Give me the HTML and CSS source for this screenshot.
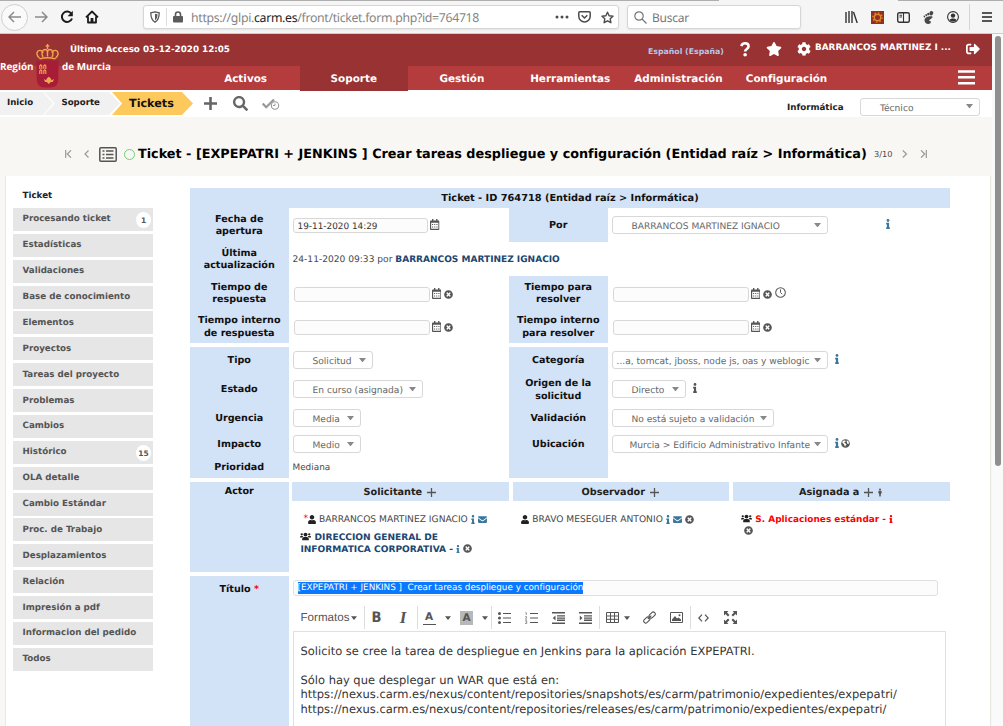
FILE: index.html
```html
<!DOCTYPE html>
<html lang="es">
<head>
<meta charset="utf-8">
<title>Ticket - ID 764718</title>
<link rel="stylesheet" href="styles.css">
</head>
<body>
<svg class="sprite" aria-hidden="true">
  <symbol id="info" viewBox="0 0 192 512"><path d="M20 424h20V280H20c-11 0-20-9-20-20v-48c0-11 9-20 20-20h112c11 0 20 9 20 20v212h20c11 0 20 9 20 20v48c0 11-9 20-20 20H20c-11 0-20-9-20-20v-48c0-11 9-20 20-20zM96 0C56 0 24 32 24 72s32 72 72 72 72-32 72-72S136 0 96 0z"/></symbol>
  <symbol id="star" viewBox="0 0 576 512"><path d="M259.3 17.8L194 150.2 47.9 171.5c-26.2 3.8-36.7 36.1-17.7 54.6l105.7 103-25 145.5c-4.5 26.3 23.2 46 46.4 33.7L288 439.6l130.7 68.7c23.2 12.2 50.9-7.4 46.4-33.7l-25-145.5 105.7-103c19-18.5 8.5-50.8-17.7-54.6L382 150.2 316.7 17.8c-11.7-23.6-45.6-23.9-57.4 0z"/></symbol>
  <symbol id="cog" viewBox="0 0 512 512"><path d="M487.4 315.7l-42.6-24.6c4.3-23.2 4.3-47 0-70.2l42.6-24.6c4.9-2.8 7.1-8.6 5.5-14-11.1-35.6-30-67.8-54.7-94.6-3.8-4.1-10-5.1-14.8-2.3L380.8 110c-17.9-15.4-38.5-27.3-60.8-35.1V25.8c0-5.6-3.9-10.5-9.4-11.7-36.7-8.2-74.3-7.8-109.2 0-5.5 1.2-9.4 6.1-9.4 11.7V75c-22.2 7.9-42.8 19.8-60.8 35.1L88.7 85.5c-4.9-2.8-11-1.9-14.8 2.3-24.7 26.7-43.6 58.9-54.7 94.6-1.7 5.4.6 11.2 5.5 14L67.3 221c-4.3 23.2-4.3 47 0 70.2l-42.6 24.6c-4.9 2.8-7.1 8.6-5.5 14 11.1 35.6 30 67.8 54.7 94.6 3.8 4.1 10 5.1 14.8 2.3l42.6-24.6c17.9 15.4 38.5 27.3 60.8 35.1v49.2c0 5.6 3.9 10.5 9.4 11.7 36.7 8.2 74.3 7.8 109.2 0 5.5-1.2 9.4-6.1 9.4-11.7v-49.2c22.2-7.9 42.8-19.8 60.8-35.1l42.6 24.6c4.9 2.8 11 1.9 14.8-2.3 24.7-26.7 43.6-58.9 54.7-94.6 1.5-5.5-.7-11.3-5.6-14.1zM256 336c-44.1 0-80-35.9-80-80s35.9-80 80-80 80 35.9 80 80-35.9 80-80 80z"/></symbol>
  <symbol id="signout" viewBox="0 0 512 512"><path d="M497 273L329 441c-15 15-41 4.5-41-17v-96H152c-13.3 0-24-10.7-24-24v-96c0-13.3 10.7-24 24-24h136V88c0-21.4 25.9-32 41-17l168 168c9.3 9.4 9.3 24.6 0 34zM192 436v-40c0-6.6-5.4-12-12-12H96c-17.7 0-32-14.3-32-32V160c0-17.7 14.3-32 32-32h84c6.6 0 12-5.4 12-12V76c0-6.6-5.4-12-12-12H96c-53 0-96 43-96 96v192c0 53 43 96 96 96h84c6.6 0 12-5.4 12-12z"/></symbol>
  <symbol id="search" viewBox="0 0 512 512"><path d="M505 442.7L405.3 343c-4.5-4.5-10.6-7-17-7H372c27.6-35.3 44-79.7 44-128C416 93.1 322.9 0 208 0S0 93.1 0 208s93.1 208 208 208c48.3 0 92.7-16.4 128-44v16.3c0 6.4 2.5 12.5 7 17l99.7 99.7c9.4 9.4 24.6 9.4 33.9 0l28.3-28.3c9.4-9.4 9.4-24.6.1-34zM208 336c-70.7 0-128-57.2-128-128 0-70.7 57.2-128 128-128 70.7 0 128 57.2 128 128 0 70.7-57.2 128-128 128z"/></symbol>
  <symbol id="remove" viewBox="0 0 512 512"><path d="M256 8C119 8 8 119 8 256s111 248 248 248 248-111 248-248S393 8 256 8zm121.600 313.100c4.700 4.700 4.700 12.300 0 17L338 377.600c-4.700 4.700-12.300 4.700-17 0L256 312l-65.100 65.600c-4.700 4.700-12.300 4.700-17 0L134.400 338c-4.700-4.700-4.700-12.300 0-17l65.600-65-65.600-65.100c-4.700-4.700-4.700-12.300 0-17l39.600-39.600c4.700-4.700 12.300-4.700 17 0l65 65.700 65.100-65.600c4.700-4.700 12.300-4.700 17 0l39.600 39.600c4.700 4.700 4.700 12.300 0 17L312 256l65.600 65.100z"/></symbol>
  <symbol id="user" viewBox="0 0 448 512"><path d="M224 256c70.700 0 128-57.300 128-128S294.700 0 224 0 96 57.300 96 128s57.300 128 128 128zm89.600 32h-16.700c-22.200 10.200-46.900 16-72.900 16s-50.600-5.800-72.900-16h-16.700C60.200 288 0 348.200 0 422.400V464c0 26.500 21.500 48 48 48h352c26.500 0 48-21.500 48-48v-41.600c0-74.200-60.200-134.400-134.400-134.400z"/></symbol>
  <symbol id="users" viewBox="0 0 20 16"><circle cx="3.200" cy="4" r="2.100"/><circle cx="16.800" cy="4" r="2.100"/><circle cx="10" cy="4.500" r="3.500"/><path d="M0 10V8.600C0 7.500.8 7 1.800 7h2.800c.6 0 1 .2 1.300.6C4.800 8.300 4.300 9.300 4.200 10zM20 10V8.600C20 7.500 19.200 7 18.200 7h-2.800c-.6 0-1 .2-1.300.6 1.100.7 1.600 1.700 1.700 2.400zM4 15v-2.500C4 10.500 5.500 9 7.500 9h5c2 0 3.500 1.500 3.500 3.500V15z"/></symbol>
  <symbol id="mail" viewBox="0 0 16 12"><path d="M1.500 0h13C15.300 0 16 .7 16 1.500v.4L8.600 7.300c-.4.300-.8.300-1.200 0L0 1.900v-.4C0 .7.700 0 1.500 0zM0 3.800l6.500 4.800c1 .7 2 .7 3 0L16 3.800v6.700c0 .8-.7 1.500-1.500 1.500h-13C.7 12 0 11.300 0 10.500z"/></symbol>
  <symbol id="cal" viewBox="0 0 14 16"><path fill-rule="evenodd" d="M3 0h2v2h4V0h2v2h1.500c.8 0 1.500.7 1.500 1.500v11c0 .8-.7 1.500-1.500 1.500h-11C.7 16 0 15.300 0 14.500v-11C0 2.700.7 2 1.500 2H3zM1.700 5.500v8.800h10.600V5.500zM3 7.200h1.600v1.600H3zm3.200 0h1.600v1.600H6.200zm3.200 0H11v1.600H9.400zM3 11h1.600v1.600H3zm3.200 0h1.600v1.600H6.200zm3.200 0H11v1.600H9.400z"/></symbol>
  <symbol id="clock" viewBox="0 0 16 16"><circle cx="8" cy="8" r="7" fill="none" stroke="currentColor" stroke-width="1.500"/><path d="M8 3.500V8l2.500 2.500" fill="none" stroke="currentColor" stroke-width="1.400"/></symbol>
  <symbol id="plus" viewBox="0 0 14 14"><path d="M5.600 0h2.800v5.600H14v2.800H8.400V14H5.600V8.400H0V5.600h5.600z"/></symbol>
  <symbol id="plusthin" viewBox="0 0 14 14"><path d="M6 0h2v6h6v2H8v6H6V8H0V6h6z"/></symbol>
  <symbol id="person" viewBox="0 0 6 12"><circle cx="3" cy="1.500" r="1.500"/><path d="M1 3.300h4l.8 4H4.500L4 12H2l-.5-4.700H.2z"/></symbol>
  <symbol id="globe" viewBox="0 0 16 16"><circle cx="8" cy="8" r="7.700"/><path fill="#fff" d="M2 5.200l2.500-2.700 3 .1.900 1.700-2 1.200-.5 1.700 2.600.7 1.200 1.800-1.500 1.700-.8 2.500-1.500-2.200-.4-2.200-2-1.500zM10.500 2.300l3 2.300.8 3.200-2 1-1.800-1.800.4-1.800-1.200-1z"/></symbol>
  <symbol id="caret" viewBox="0 0 8 5"><path d="M0 0h8L4 5z"/></symbol>
</svg>

<div class="browser">
  <div class="tabs-edge"><span class="edge-left"></span><span class="edge-right"></span></div>
  <div class="nav">
    <span class="back"><svg width="14" height="12" viewBox="0 0 14 12" class="ln grey"><path d="M13 6H1.500M6 1L1 6l5 5"/></svg></span>
    <svg width="14" height="12" viewBox="0 0 14 12" class="ln grey fwd"><path d="M1 6h11.500M8 1l5 5-5 5"/></svg>
    <svg width="14" height="14" viewBox="0 0 14 14" class="reload"><path d="M11.500 4A5.200 5.200 0 1 0 12 8.500" fill="none" stroke="#1b1b1b" stroke-width="2"/><path d="M12.800.8v5.400H7.600z" fill="#1b1b1b"/></svg>
    <svg width="14" height="14" viewBox="0 0 14 14" class="home"><path d="M1 7.300L7 1.500l6 5.800M3 6.500V12.500h8V6.500" fill="none" stroke="#1b1b1b" stroke-width="1.800" stroke-linejoin="round"/><path d="M5.600 8h2.800v4H5.600z" fill="#1b1b1b"/></svg>
    <div class="url">
      <svg width="10" height="12" viewBox="0 0 10 12" class="shield"><path d="M5 .8l4.200 1C9.200 6.500 8.300 9.500 5 11.200 1.700 9.500.8 6.500.8 1.800z" fill="none" stroke="#5b5b5b" stroke-width="1.300"/><path d="M5 2.700v6.500C7 8 7.500 5.500 7.500 3.200z" fill="#5b5b5b"/></svg>
      <span class="url-sep"></span>
      <svg width="10" height="12" viewBox="0 0 10 12" class="lock"><path d="M2.500 6V3.500a2.500 2.500 0 0 1 5 0V6" fill="none" stroke="#5b5b5b" stroke-width="1.600"/><rect y="5" width="10" height="6.500" rx="1" fill="#5b5b5b"/></svg>
      <span class="address">https://glpi.<b>carm.es</b>/front/ticket.form.php?id=764718</span>
      <svg width="14" height="4" viewBox="0 0 14 4" class="dots"><circle cx="2" cy="2" r="1.500"/><circle cx="7" cy="2" r="1.500"/><circle cx="12" cy="2" r="1.500"/></svg>
      <svg width="13" height="12" viewBox="0 0 13 12" class="pocket"><path d="M1.700.8h9.600c.5 0 .9.400.9.900v3.500a5.700 5.700 0 0 1-11.400 0V1.700c0-.5.400-.9.900-.9zM3.700 4.300l2.800 2.700 2.800-2.700" fill="none" stroke="#4b4b4b" stroke-width="1.500"/></svg>
      <svg width="13" height="13" viewBox="0 0 13 13"><path d="M6.500 1.200l1.600 3.500 3.900.5-2.800 2.600.7 3.900-3.400-1.900-3.400 1.900.7-3.900L1 5.200l3.900-.5z" fill="none" stroke="#4b4b4b" stroke-width="1.400" stroke-linejoin="round"/></svg>
    </div>
    <div class="find">
      <svg width="13" height="13" viewBox="0 0 13 13"><circle cx="5" cy="5" r="4.200" fill="none" stroke="#777" stroke-width="1.200"/><path d="M8 8l4.500 4.500" stroke="#777" stroke-width="1.300"/></svg>
      <span>Buscar</span>
    </div>
    <div class="tools">
      <svg width="13" height="12" viewBox="0 0 13 12"><path d="M1 1v11M4 0v12M7 0v12M8.500 1l3.700 11" fill="none" stroke="#333" stroke-width="1.400"/></svg>
      <svg width="13" height="13" viewBox="0 0 13 13"><rect width="13" height="13" fill="#982c20"/><circle cx="6.500" cy="6.500" r="3.200" fill="none" stroke="#d98a27" stroke-width="1.400"/><circle cx="6.500" cy="6.500" r="4.600" fill="none" stroke="#d98a27" stroke-width="1.400" stroke-dasharray="1.400 2.200"/></svg>
      <svg width="13" height="11" viewBox="0 0 13 11"><rect x=".7" y=".7" width="11.600" height="9.600" rx="1.500" fill="none" stroke="#333" stroke-width="1.400"/><path d="M6.500 1v9M2.500 3.200H5M2.500 5H5" stroke="#333" stroke-width="1.100"/></svg>
      <svg width="11" height="13" viewBox="0 0 11 13" fill="#222"><ellipse cx="8.300" cy="2.300" rx="1.900" ry="2.200" transform="rotate(25 8.300 2.300)"/><ellipse cx="5.200" cy="3.100" rx="1" ry="1.400"/><ellipse cx="3.200" cy="4.200" rx=".9" ry="1.200" transform="rotate(-15 3 4)"/><ellipse cx="1.400" cy="5.500" rx=".8" ry="1.100" transform="rotate(-25 1.400 5.500)"/><path d="M9.300 5.400C6 4.800 1.500 6.300 1.500 9.200c0 2.200 1.800 3.800 3.700 3.800s3.100-1.500 2.700-2.600c-.3-.7-2-.1-1.700-1C6.800 8 10.500 7 9.300 5.400z"/></svg>
      <svg width="12" height="12" viewBox="0 0 12 12"><circle cx="6" cy="6" r="5.400" fill="none" stroke="#333" stroke-width="1.100"/><circle cx="6" cy="4.600" r="2.200" fill="#333"/><path d="M2.500 9c1-2 6-2 7 0-1.500 2-5.500 2-7 0z" fill="#333"/></svg>
      <span class="tool-sep"></span>
      <svg width="10" height="10" viewBox="0 0 10 10"><path d="M0 1h10M0 5h10M0 9h10" stroke="#222" stroke-width="1.300"/></svg>
    </div>
  </div>
</div>

<div class="viewport">
  <div class="page">
    <header class="head">
      <div class="brand">
        <span>Región</span>
        <svg width="23" height="44" viewBox="0 0 23 44">
          <path d="M.5 16.500h22v7c0 0 0 12-.5 14-1 5-4 6-10.500 6S2 42.500 1 37.500c-.5-2-.5-21-.5-21z" fill="#a71d38"/>
          <g fill="none" stroke="#f0a650" stroke-width="1.400"><path d="M3.500 14c-2.500-2-3.500-5-1.500-7 2-1.500 4.500 0 5 2M19.500 14c2.500-2 3.500-5 1.500-7-2-1.500-4.500 0-5 2M7 13C5 9 6.500 5.500 9 5.500c1.500 0 2.500 1.500 2.500 3v4M16 13c2-4 .5-7.500-2-7.500-1.500 0-2.500 1.500-2.500 3M11.500 0v5M9.700 2h3.600M3.500 14.800c5-1.400 11-1.400 16 0"/></g>
          <g fill="none" stroke="#f0a650" stroke-width="1.100"><path d="M3.800 25v-3.200l1-1 1 1V25M7.800 25v-3.200l1-1 1 1V25M3.800 30v-3.200l1-1 1 1V30M7.800 30v-3.200l1-1 1 1V30"/></g>
          <path d="M8 35l2 1.200 1-2 1.800-1.500 1.800 1.500 1 2L18 35l-1.200 3h-2L12.800 40l-2-2H9z" fill="#f0a650"/>
        </svg>
        <span>de Murcia</span>
      </div>
      <div class="top">
        <span class="last">Último Acceso 03-12-2020 12:05</span>
        <a class="lang">Español (España)</a>
        <svg width="10" height="15" viewBox="0 0 10 15" class="help"><path d="M1.300 4.200C1.800 2.300 3 1.300 5 1.300c2.200 0 3.600 1.200 3.600 3 0 2.700-3.500 2.600-3.500 5.300" fill="none" stroke="#fff" stroke-width="2.600"/><circle cx="5.100" cy="12.800" r="1.800" fill="#fff"/></svg>
        <svg width="16" height="14" class="fav"><use href="#star"/></svg>
        <svg width="14" height="14" class="cog"><use href="#cog"/></svg>
        <span class="who">BARRANCOS MARTINEZ I ...</span>
        <svg width="14" height="14" class="exit"><use href="#signout"/></svg>
      </div>
      <nav class="menu">
        <a>Activos</a><a class="on">Soporte</a><a>Gestión</a><a>Herramientas</a><a>Administración</a><a>Configuración</a>
        <svg width="17" height="15" viewBox="0 0 17 15" class="burger"><path d="M0 1.500h17M0 7.300h17M0 13.200h17" stroke="#fff" stroke-width="2.500"/></svg>
      </nav>
    </header>

    <div class="crumbs">
      <a class="crumb c1">Inicio</a><a class="crumb c2">Soporte</a><a class="crumb c3">Tickets</a>
      <svg width="13" height="13" class="dim add"><use href="#plus"/></svg>
      <svg width="15" height="15" class="dim look"><use href="#search"/></svg>
      <svg width="18" height="12" viewBox="0 0 18 12" class="check"><path d="M.7 5.500l3.500 3.700L12 1.500" fill="none" stroke="#999" stroke-width="2.300"/><circle cx="13" cy="7.500" r="3.700" fill="#fff" stroke="#999" stroke-width="1.100"/><path d="M13 5.500v2h-2" fill="none" stroke="#999"/></svg>
      <span class="entity">Informática</span>
      <span class="select profile"><span>Técnico</span><svg width="6" height="4"><use href="#caret"/></svg></span>
    </div>

    <div class="title">
      <svg width="7" height="8" viewBox="0 0 7 8" class="ln pale first"><path d="M.7 0v8M6 .3L2.300 4 6 7.700"/></svg>
      <svg width="5" height="8" viewBox="0 0 5 8" class="ln pale prev"><path d="M4.500.5L1 4l3.500 3.500"/></svg>
      <svg width="18" height="15" viewBox="0 0 18 15" class="list"><rect x=".8" y=".8" width="16.400" height="13.400" rx="1" fill="none" stroke="#555" stroke-width="1.500"/><path d="M3.500 4h2M3.500 7.500h2M3.500 11h2M7 4h7.500M7 7.500h7.500M7 11h7.500" stroke="#555" stroke-width="1.300"/></svg>
      <span class="dot"></span>
      <h1>Ticket - [EXPEPATRI + JENKINS ] Crear tareas despliegue y configuración (Entidad raíz &gt; Informática)</h1>
      <span class="count">3/10</span>
      <svg width="6" height="8" viewBox="0 0 6 8" class="ln pale next"><path d="M.8.5L4.500 4 .8 7.500"/></svg>
      <svg width="7" height="8" viewBox="0 0 7 8" class="ln pale"><path d="M6.300 0v8M1 .3L4.700 4 1 7.700"/></svg>
    </div>

    <div class="card">
      <aside class="side">
        <a class="cur">Ticket</a>
        <a>Procesando ticket<b class="badge">1</b></a>
        <a>Estadísticas</a>
        <a>Validaciones</a>
        <a>Base de conocimiento</a>
        <a>Elementos</a>
        <a>Proyectos</a>
        <a>Tareas del proyecto</a>
        <a>Problemas</a>
        <a>Cambios</a>
        <a>Histórico<b class="badge">15</b></a>
        <a>OLA detalle</a>
        <a>Cambio Estándar</a>
        <a>Proc. de Trabajo</a>
        <a>Desplazamientos</a>
        <a>Relación</a>
        <a>Impresión a pdf</a>
        <a>Informacion del pedido</a>
        <a>Todos</a>
      </aside>

      <main class="form">
        <div class="caption">Ticket - ID 764718 (Entidad raíz &gt; Informática)</div>
        <div class="grid dates">
          <div class="lab">Fecha de<br>apertura</div>
          <div class="val"><span class="input">19-11-2020 14:29</span><svg width="9" height="10" class="cal"><use href="#cal"/></svg></div>
          <div class="lab">Por</div>
          <div class="val"><span class="select wide">BARRANCOS MARTINEZ IGNACIO<svg width="6" height="4"><use href="#caret"/></svg></span><svg width="4" height="10" class="info far"><use href="#info"/></svg></div>

          <div class="lab">Última<br>actualización</div>
          <div class="val span3"><span class="date">24-11-2020 09:33 por</span>&nbsp;<a class="person">BARRANCOS MARTINEZ IGNACIO</a></div>

          <div class="lab">Tiempo de<br>respuesta</div>
          <div class="val in"><span class="input"></span><svg width="9" height="10" class="cal"><use href="#cal"/></svg><svg width="9" height="9" class="rm"><use href="#remove"/></svg></div>
          <div class="lab">Tiempo para<br>resolver</div>
          <div class="val in r"><span class="input"></span><svg width="9" height="10" class="cal"><use href="#cal"/></svg><svg width="9" height="9" class="rm"><use href="#remove"/></svg><svg width="11" height="11" class="clock"><use href="#clock"/></svg></div>

          <div class="lab">Tiempo interno<br>de respuesta</div>
          <div class="val in"><span class="input"></span><svg width="9" height="10" class="cal"><use href="#cal"/></svg><svg width="9" height="9" class="rm"><use href="#remove"/></svg></div>
          <div class="lab">Tiempo interno<br>para resolver</div>
          <div class="val in r"><span class="input"></span><svg width="9" height="10" class="cal"><use href="#cal"/></svg><svg width="9" height="9" class="rm"><use href="#remove"/></svg></div>
        </div>

        <div class="grid props">
          <div class="lab">Tipo</div>
          <div class="val"><span class="select w80">Solicitud<svg width="6" height="4"><use href="#caret"/></svg></span></div>
          <div class="lab">Categoría</div>
          <div class="val"><span class="select wide cat">...a, tomcat, jboss, node js, oas y weblogic<svg width="6" height="4"><use href="#caret"/></svg></span><svg width="4" height="10" class="info"><use href="#info"/></svg></div>

          <div class="lab">Estado</div>
          <div class="val"><span class="select w130">En curso (asignada)<svg width="6" height="4"><use href="#caret"/></svg></span></div>
          <div class="lab">Origen de la<br>solicitud</div>
          <div class="val"><span class="select w74">Directo<svg width="6" height="4"><use href="#caret"/></svg></span><svg width="4" height="10" class="info dark"><use href="#info"/></svg></div>

          <div class="lab">Urgencia</div>
          <div class="val"><span class="select w68">Media<svg width="6" height="4"><use href="#caret"/></svg></span></div>
          <div class="lab">Validación</div>
          <div class="val"><span class="select w162">No está sujeto a validación<svg width="6" height="4"><use href="#caret"/></svg></span></div>

          <div class="lab">Impacto</div>
          <div class="val"><span class="select w68">Medio<svg width="6" height="4"><use href="#caret"/></svg></span></div>
          <div class="lab">Ubicación</div>
          <div class="val"><span class="select wide loc">Murcia &gt; Edificio Administrativo Infante<svg width="6" height="4"><use href="#caret"/></svg></span><svg width="4" height="10" class="info"><use href="#info"/></svg><svg width="9" height="9" class="globe"><use href="#globe"/></svg></div>

          <div class="lab">Prioridad</div>
          <div class="val plain">Mediana</div>
          <div class="lab"></div>
          <div class="val"></div>
        </div>

        <div class="actors">
          <div class="lab top-lab">Actor</div>
          <section class="actor">
            <h2>Solicitante <svg width="9" height="9"><use href="#plusthin"/></svg></h2>
            <p class="p1"><i class="req">*</i><svg width="8" height="9" class="blk"><use href="#user"/></svg><span>BARRANCOS MARTINEZ IGNACIO</span><svg width="4" height="9" class="info"><use href="#info"/></svg><svg width="9" height="7" class="mail"><use href="#mail"/></svg></p>
            <div class="group"><svg width="11" height="9" class="blk"><use href="#users"/></svg> DIRECCION GENERAL DE<br>INFORMATICA CORPORATIVA - <svg width="4" height="8" class="info"><use href="#info"/></svg><svg width="9" height="9" class="rm"><use href="#remove"/></svg></div>
          </section>
          <section class="actor">
            <h2>Observador <svg width="9" height="9"><use href="#plusthin"/></svg></h2>
            <p class="p2"><svg width="8" height="9" class="blk"><use href="#user"/></svg><span>BRAVO MESEGUER ANTONIO</span><svg width="4" height="9" class="info"><use href="#info"/></svg><svg width="9" height="7" class="mail"><use href="#mail"/></svg><svg width="9" height="9" class="rm"><use href="#remove"/></svg></p>
          </section>
          <section class="actor">
            <h2>Asignada a <svg width="9" height="9"><use href="#plusthin"/></svg><svg width="4" height="9" class="man"><use href="#person"/></svg></h2>
            <div class="group red"><svg width="11" height="9" class="blk"><use href="#users"/></svg> S. Aplicaciones estándar - <svg width="4" height="8" class="info"><use href="#info"/></svg><br><svg width="9" height="9" class="rm"><use href="#remove"/></svg></div>
          </section>
        </div>

        <div class="body">
          <div class="lab top-lab"><span>Título <i>*</i></span></div>
          <div class="edit">
            <div class="subject"><span>[EXPEPATRI + JENKINS ]&nbsp; Crear tareas despliegue y configuración</span></div>
            <div class="toolbar">
              <div class="tg fmt"><span>Formatos</span><svg width="6" height="4"><use href="#caret"/></svg></div>
              <div class="tg"><span class="t bold">B</span><span class="t ital">I</span></div>
              <div class="tg"><span class="t fc"><u>A</u></span><span class="t cr"><svg width="6" height="4"><use href="#caret"/></svg></span><span class="t bc"><em>A</em></span><span class="t cr2"><svg width="6" height="4"><use href="#caret"/></svg></span></div>
              <div class="tg">
                <span class="t"><svg width="13" height="12" viewBox="0 0 13 12"><circle cx="1.500" cy="1.500" r="1.500"/><circle cx="1.500" cy="6" r="1.500"/><circle cx="1.500" cy="10.500" r="1.500"/><path d="M5 1h8v1H5zM5 5.500h8v1H5zM5 10h8v1H5z"/></svg></span>
                <span class="t"><svg width="13" height="12" viewBox="0 0 13 12"><path d="M5 1h8v1H5zM5 5.500h8v1H5zM5 10h8v1H5z"/><path d="M.3.700h1V3M0 4.700h1.500v1.200L.3 7.200h1.500M0 8.700h1.700v2.800H0M.6 10h1" fill="none" stroke="currentColor" stroke-width=".6"/></svg></span>
                <span class="t"><svg width="13" height="12" viewBox="0 0 13 12"><path d="M0 0h13v1.400H0zM5 3.200h8v1.300H5zM5 5.400h8v1.300H5zM5 7.600h8v1.300H5zM0 10.500h13v1.400H0zM3.500 3.500v5L.8 6z"/></svg></span>
                <span class="t"><svg width="13" height="12" viewBox="0 0 13 12"><path d="M0 0h13v1.400H0zM5 3.200h8v1.300H5zM5 5.400h8v1.300H5zM5 7.600h8v1.300H5zM0 10.500h13v1.400H0zM.8 3.500v5L3.500 6z"/></svg></span>
              </div>
              <div class="tg">
                <span class="t"><svg width="13" height="11" viewBox="0 0 13 11"><path d="M.5.500h12v10H.5zM.5 4h12M.5 7.300h12M4.500.500v10M8.500.500v10" fill="none" stroke="currentColor"/></svg></span>
                <span class="t tc"><svg width="6" height="4"><use href="#caret"/></svg></span>
                <span class="t"><svg width="13" height="13" viewBox="0 0 13 13"><g fill="none" stroke="currentColor" stroke-width="1.100"><rect x="5.700" y="2" width="7" height="4" rx="2" transform="rotate(-45 9.200 4)"/><rect x=".3" y="7" width="7" height="4" rx="2" transform="rotate(-45 3.800 9)"/><path d="M4.800 8.200l3.500-3.500"/></g></svg></span>
                <span class="t"><svg width="13" height="11" viewBox="0 0 13 11"><path d="M.5.500h12v10H.5z" fill="none" stroke="currentColor"/><path d="M2 9V7.500L5 4l2 2.500 1.500-1L11 7.500V9z"/><circle cx="9.500" cy="3.200" r="1"/></svg></span>
              </div>
              <div class="tg">
                <span class="t"><svg width="11" height="8" viewBox="0 0 11 8"><path d="M4 .7L.8 4 4 7.300M7 .7L10.200 4 7 7.300" fill="none" stroke="currentColor" stroke-width="1.200"/></svg></span>
                <span class="t"><svg width="13" height="13" viewBox="0 0 13 13"><path d="M0 0h4.500L3 1.500l2.500 2.500L4 5.500 1.500 3 0 4.500zM13 0v4.500L11.500 3 9 5.500 7.500 4 10 1.500 8.500 0zM0 13V8.500L1.500 10 4 7.500 5.500 9 3 11.500 4.500 13zM13 13H8.500l1.500-1.500L7.500 9 9 7.500l2.500 2.500L13 8.500z"/></svg></span>
              </div>
            </div>
            <div class="text">
              <p>Solicito se cree la tarea de despliegue en Jenkins para la aplicación EXPEPATRI.</p>
              <p>&nbsp;</p>
              <p>Sólo hay que desplegar un WAR que está en:</p>
              <p>https://nexus.carm.es/nexus/content/repositories/snapshots/es/carm/patrimonio/expedientes/expepatri/</p>
              <p>https://nexus.carm.es/nexus/content/repositories/releases/es/carm/patrimonio/expedientes/expepatri/</p>
            </div>
          </div>
        </div>
      </main>
    </div>
  </div>
  <div class="scroll"><span></span></div>
</div>
</body>
</html>
```
FILE: styles.css
```css
* { box-sizing: border-box; margin: 0; padding: 0; }
html, body { height: 726px; overflow: hidden; }
body {
  width: 1003px;
  display: flex;
  flex-direction: column;
  background: #fff;
  font-family: "DejaVu Sans", Verdana, sans-serif;
  font-size: 9.1px;
  color: #484848;
  text-rendering: geometricPrecision;
}
svg { flex: none; fill: currentColor; }
.sprite { position: absolute; width: 0; height: 0; }
.ln { fill: none; stroke-width: 1.2; }
.grey { stroke: #8b8b8b; stroke-width: 1.5; }
.pale { stroke: #999; }

/* Browser chrome */
.browser { height: 34px; flex: none; background: #f5f5f5; border-bottom: 1px solid #ccc; }
.tabs-edge { height: 1px; display: flex; justify-content: space-between; }
.tabs-edge span { background: #aeaeae; }
.edge-left { width: 719px; }
.edge-right { width: 105px; }
.nav { height: 32px; display: flex; align-items: center; }
.back { width: 27px; height: 27px; margin-left: 1px; border: 1px solid #cfcfcf; border-radius: 50%; display: flex; align-items: center; justify-content: center; background: #fafafa; }
.fwd { margin-left: 6px; }
.reload { margin-left: 12px; }
.home { margin-left: 11px; }
.url { width: 476px; height: 24px; margin-left: 44px; padding-left: 6px; display: flex; align-items: center; background: #fff; border: 1px solid #d6d6d6; border-radius: 3px; box-shadow: 0 1px 2px rgba(0,0,0,.08); }
.url-sep { width: 1px; height: 18px; background: #ddd; margin: 0 6px; }
.address { width: 364px; margin-left: 8px; font: 12.3px "Noto Sans", sans-serif; letter-spacing: -.32px; color: #858585; white-space: nowrap; }
.address b { font-weight: 400; color: #222; }
.dots { fill: #4b4b4b; }
.pocket { margin: 0 10px 0 9px; }
.find { width: 174px; height: 24px; margin-left: 8px; padding-left: 6px; display: flex; align-items: center; gap: 5px; background: #fff; border: 1px solid #d6d6d6; border-radius: 3px; box-shadow: 0 1px 2px rgba(0,0,0,.08); font: 12px "Noto Sans", sans-serif; letter-spacing: -.25px; color: #777; }
.tools { margin-left: 44px; display: flex; align-items: center; gap: 13px; }
.tool-sep { width: 1px; height: 26px; background: #d5d5d5; margin: 0 -1px 0 -3px; }

/* Page area and scrollbar */
.viewport { flex: 1; display: flex; min-height: 0; }
.page { width: 992px; display: flex; flex-direction: column; background: #f8f7f3; overflow: hidden; }
.scroll { width: 11px; padding: 2px 0 0 3px; background: #fafafa; }
.scroll span { display: block; width: 6px; height: 430px; border-radius: 3px; background: #8f8f8f; }

/* Header */
.head { position: relative; height: 56px; flex: none; background: #b53c3d; color: #fff; font-weight: 700; }
.top { height: 32px; display: flex; align-items: center; background: #983233; white-space: nowrap; }
.top svg { margin-top: -2px; }
.brand { position: absolute; left: 0; top: 10px; display: flex; align-items: center; font: 700 9.9px "Open Sans", sans-serif; white-space: nowrap; }
.brand svg { margin: 0 3px 0 3px; }
.brand span { width: 33px; }
.last { width: 578px; margin-left: 70px; font-size: 8.77px; padding-bottom: 0; }
.lang { width: 92px; font-size: 7.8px; color: #b6c7e8; padding-top: 2px; }
.top .fav { margin-left: 16px; }
.top .cog { margin-left: 15px; }
.who { width: 151px; margin-left: 4px; font-size: 8.87px; padding-bottom: 5px; }
.menu { height: 24px; display: flex; align-items: flex-start; padding-left: 191.500px; font-size: 10.4px; }
.menu a { width: 108.2px; height: 24px; line-height: 26px; text-align: center; }
.menu .on { height: 25px; background: #983233; position: relative; }
.burger { margin: 4px 0 0 117px; }

/* Breadcrumb */
.crumbs { height: 27px; flex: none; display: flex; align-items: center; background: #fff; color: #222; font-weight: 700; }
.crumb { height: 23px; line-height: 23px; background: #f1f1f1; font-size: 8.6px; }
.c1 { width: 53px; padding-left: 7px; clip-path: polygon(0 0, 43px 0, 100% 50%, 43px 100%, 0 100%); }
.c2 { width: 76px; margin-left: -9px; padding-left: 17.500px; clip-path: polygon(0 0, 65px 0, 100% 50%, 65px 100%, 0 100%, 11px 50%); }
.c3 { width: 81px; margin-left: -8px; padding-left: 17px; background: #fec95c; color: #111; font-size: 11.2px; clip-path: polygon(0 0, 70px 0, 100% 50%, 70px 100%, 0 100%, 10px 50%); }
.dim { color: #666; }
.add { margin-left: 11px; }
.look { margin-left: 16px; }
.check { margin-left: 14px; }
.entity { width: 73px; margin-left: 507px; font-size: 8.7px; padding-top: 8px; }
.profile.select { width: 120px; margin-top: 6px; padding-left: 19px; }

.select { height: 18px; display: flex; align-items: center; justify-content: space-between; padding: 4px 6px 0 19px; background: #fff; border: 1px solid #d8d8d8; border-radius: 3px; font-weight: 400; color: #666; white-space: nowrap; font-size: 9.1px; }
.select svg { width: 7px; height: 4.500px; margin-top: -4px; color: #888; }

/* Title strip */
.title { height: 59px; flex: none; padding: 15px 0 0 65px; display: flex; align-items: center; white-space: nowrap; }
.prev { margin-left: 12px; }
.list { margin-left: 10px; }
.dot { width: 11px; height: 11px; margin-left: 7px; border: 1.5px solid #73cf78; border-radius: 50%; }
h1 { width: 736px; margin-left: 3px; padding-top: 1px; font-size: 12.81px; color: #000; }
.count { width: 28px; font-size: 8.2px; }
.next { margin-right: 12px; }

/* Card: side tabs and form */
.card { flex: 1; display: flex; margin: 0 1px 0 5px; border: 1px solid #e9e8e2; border-width: 0 1px; background: #fff; }
.side { width: 140px; margin-left: 7px; padding-top: 6px; display: flex; flex-direction: column; gap: 2.88px; font-weight: 700; font-size: 8.72px; }
.side a { height: 23px; flex: none; padding: 0 2px 0 9.500px; display: flex; align-items: center; justify-content: space-between; background: #e6e6e6; color: #555; white-space: nowrap; }
.side .cur { background: none; color: #222; padding-top: 4px; }
.badge { width: 15px; height: 16px; margin-top: 2px; border-radius: 50%; background: #fff; display: flex; align-items: center; justify-content: center; font-size: 7.500px; }
.form { width: 760px; margin: 12px 0 0 37px; }
.caption { height: 20px; line-height: 22px; text-align: center; font-weight: 700; font-size: 9.79px; color: #111; background: #d2e2f7; }
.grid { display: grid; grid-template-columns: 98.500px 220.500px 98.500px 342.500px; }
.dates { grid-template-rows: 34px 34px 34px 33px; }
.props { grid-template-rows: 27px 31px 27px 25px 21px; margin-top: 4px; }
.lab { display: flex; align-items: center; justify-content: center; text-align: center; padding-top: 2.500px; background: #d2e2f7; color: #111; font-weight: 700; font-size: 9.6px; line-height: 12.700px; }
.val { display: flex; align-items: center; padding-left: 4px; }
.props .val { padding-bottom: 1px; }
.span3 { grid-column: span 3; padding-top: 2px; }
.in { padding: 2px 0 0 5.500px; }
.date { color: #484848; }
.person { font-weight: 700; color: #1b4670; font-size: 9.03px; }
.input { width: 135.500px; height: 15px; line-height: 16px; padding-left: 4px; border: 1px solid #d8d8d8; border-radius: 3px; background: #fcfcfc; font-size: 8.9px; color: #333; }
.cal { width: 9.500px; height: 11px; margin: -2px 0 0 2px; color: #555; }
.rm { margin-left: 3px; color: #555; }
.clock { margin: -3px 0 0 2.500px; color: #555; }
.info { color: #3a769d; margin-left: 7px; }
.val .info { margin-top: -2px; }
.val .far { margin-left: 58px; }
.dark { color: #555; }
.globe { margin: -1px 0 0 2px; color: #555; }
.wide { width: 216px; }
.cat.select { padding-left: 4px; }
.loc.select { padding-left: 17px; }
.w80 { width: 80px; }
.w130 { width: 130px; }
.w74 { width: 74px; }
.w68 { width: 68px; }
.w162 { width: 162px; }
.props .plain { font-size: 8.9px; padding-top: 2px; }

/* Actors */
.actors { display: grid; grid-template-columns: 98.500px 217px 216px 217px; column-gap: 3.900px; height: 90px; margin-top: 4px; }
.top-lab { align-items: flex-start; padding-top: 4px; }
.actor h2 { height: 19px; padding: 2px 2px 0 0; display: flex; align-items: center; justify-content: center; gap: 5px; background: #d2e2f7; font-size: 9.7px; color: #222; }
.actor h2 svg { color: #555; margin-top: -1px; }
.actor p { height: 12px; display: flex; align-items: center; margin-top: 12px; white-space: nowrap; }
.actor p span { margin: 1px 0 0 3px; font-size: 9.13px; }
.actor p .info { margin-left: 3px; }
.p1 { padding-left: 11px; }
.p2 { padding-left: 8px; }
.req { color: red; font-style: normal; }
.blk { color: #222; }
.mail { margin-left: 3px; color: #3a769d; }
.group { margin: 7px 0 0 8px; font-weight: 700; font-size: 9.08px; line-height: 12px; color: #1b4670; white-space: nowrap; }
.group svg { vertical-align: -1px; }
.group .info { margin-left: 0; }
.group.red { margin-top: 13px; color: red; font-size: 8.95px; }
.red .info { color: red; }

/* Title and description */
.body { display: grid; grid-template-columns: 98.500px 1fr; column-gap: 4px; height: 160px; margin-top: 4px; }
.body .top-lab { padding-top: 7.500px; }
.lab i { color: red; font-style: normal; }
.subject { width: 645px; height: 16px; margin-top: 4px; padding-left: 4px; line-height: 14px; border: 1px solid #e0e0e0; border-radius: 3px; background: #fcfcfc; font-size: 8.81px; color: #fff; }
.subject span { display: inline-block; height: 12px; line-height: 13.500px; background: #0a78ff; vertical-align: top; margin-top: 1px; white-space: nowrap; }
.toolbar { height: 35px; padding-top: 10px; display: flex; color: #555; }
.tg { height: 23px; display: flex; align-items: center; box-shadow: inset 1px 0 #ddd; }
.fmt { width: 71.500px; padding-left: 8px; gap: 2px; box-shadow: none; font: 11.6px "Liberation Sans", Arial, sans-serif; }
.fmt span { width: 48px; }
.t { width: 27px; display: flex; justify-content: center; align-items: center; }
.bold { width: 25px; font: 700 14.500px "DejaVu Sans Condensed", "Liberation Sans", sans-serif; }
.ital { width: 28px; font: italic 700 17px "Liberation Serif", serif; }
.fc { width: 24px; }
.fc u { width: 13px; text-align: center; text-decoration: none; line-height: 13px; border-bottom: 1px solid #555; font-weight: 700; font-size: 10.500px; }
.cr { width: 13px; }
.bc { width: 25px; }
.bc em { width: 13px; height: 14px; line-height: 14px; text-align: center; font-style: normal; font-weight: 700; font-size: 10.500px; background: #b8b8b8; }
.cr2 { width: 12px; }
.tc { width: 9px; margin-left: -4px; margin-right: 5px; }
.tc + .t { margin-left: 0; }
.tg .tc ~ .t { width: 27px; }
.text { width: 653px; height: 110px; padding: 11.500px 0 0 7px; border: 1px solid #e0e0e0; font-size: 11.47px; line-height: 14.500px; color: #333; white-space: nowrap; }
```
